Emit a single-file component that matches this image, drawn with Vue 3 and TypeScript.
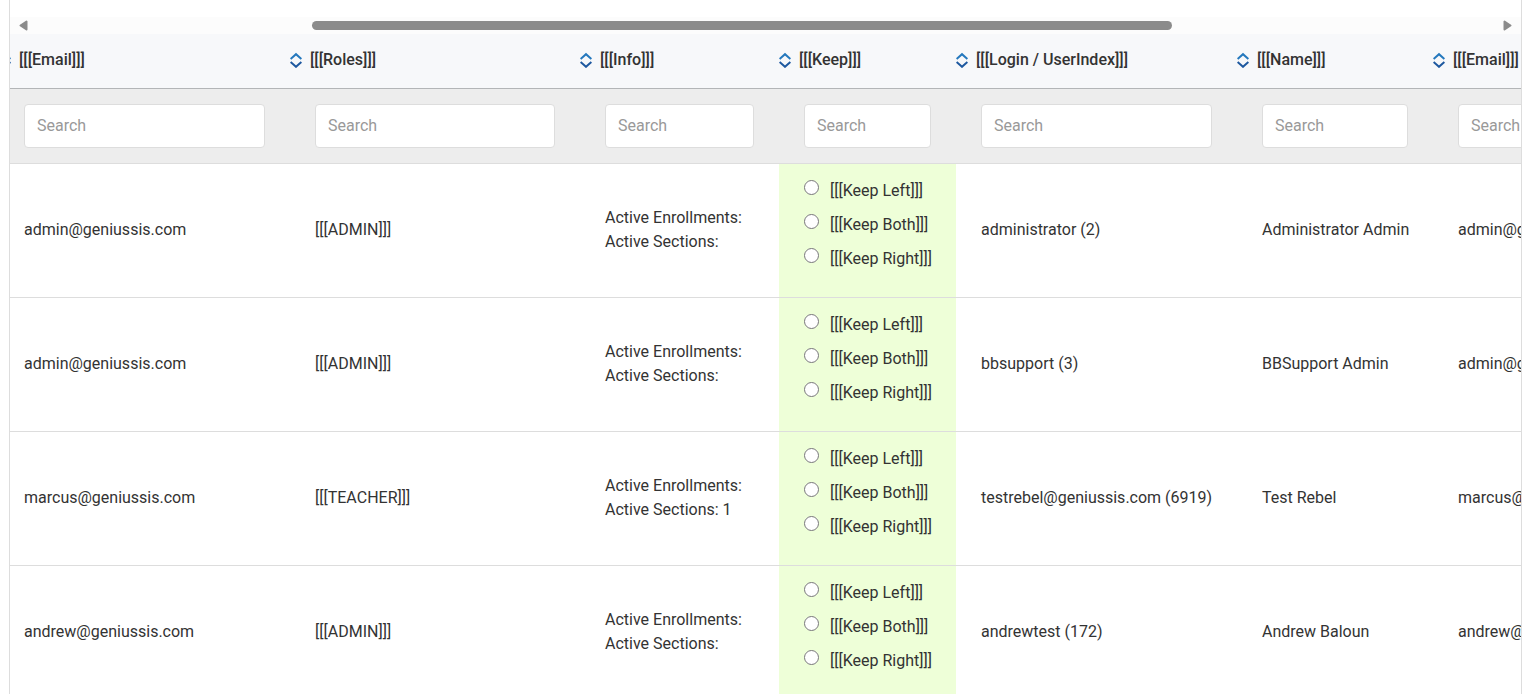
<script setup lang="ts">
import { computed, ref } from 'vue'

interface Column {
  key: 'email' | 'roles' | 'info' | 'keep' | 'login' | 'name' | 'email2'
  label: string
  width: number
}

interface Row {
  email: string
  roles: string
  sections: string
  login: string
  name: string
}

const columns: Column[] = [
  { key: 'email', label: 'Email', width: 291 },
  { key: 'roles', label: 'Roles', width: 290 },
  { key: 'info', label: 'Info', width: 199 },
  { key: 'keep', label: 'Keep', width: 177 },
  { key: 'login', label: 'Login / UserIndex', width: 281 },
  { key: 'name', label: 'Name', width: 196 },
  { key: 'email2', label: 'Email', width: 291 },
]

const rows: Row[] = [
  { email: 'admin@geniussis.com', roles: 'ADMIN', sections: '', login: 'administrator (2)', name: 'Administrator Admin' },
  { email: 'admin@geniussis.com', roles: 'ADMIN', sections: '', login: 'bbsupport (3)', name: 'BBSupport Admin' },
  { email: 'marcus@geniussis.com', roles: 'TEACHER', sections: '1', login: 'testrebel@geniussis.com (6919)', name: 'Test Rebel' },
  { email: 'andrew@geniussis.com', roles: 'ADMIN', sections: '', login: 'andrewtest (172)', name: 'Andrew Baloun' },
]

const keepOptions = ['Left', 'Both', 'Right']
const tag = (text: string) => `[[[${text}]]]`

const filters = ref<Record<string, string>>({})
const choices = ref<string[]>(rows.map(() => ''))
const tableWidth = computed(() => columns.reduce((sum, c) => sum + c.width, 0))
</script>

<template>
  <main class="panel">
    <div class="scrollbar">
      <button type="button" class="arrow" aria-label="Scroll left">
        <svg width="10" height="12" viewBox="0 0 10 12"><path d="M7.5 1.5V9.5L1.5 5.5Z" /></svg>
      </button>
      <div class="track"><div class="thumb"></div></div>
      <button type="button" class="arrow" aria-label="Scroll right">
        <svg width="10" height="12" viewBox="0 0 10 12"><path d="M1.5 1.5V9.5L7.5 5.5Z" /></svg>
      </button>
    </div>
    <div class="viewport">
      <table :style="{ width: tableWidth + 'px' }">
        <colgroup>
          <col v-for="c in columns" :key="c.key" :style="{ width: c.width + 'px' }" />
        </colgroup>
        <thead>
          <tr class="titles">
            <th v-for="c in columns" :key="c.key" scope="col">
              <button type="button" class="sort">
                <svg width="12" height="16" viewBox="0 0 12 16" aria-hidden="true">
                  <path d="M0.6 7L6 2.2L11.4 7" stroke="#2478bd" />
                  <path d="M0.6 10L6 14.8L11.4 10" stroke="#1d589f" />
                </svg>
                <span>{{ tag(c.label) }}</span>
              </button>
            </th>
          </tr>
          <tr class="filters">
            <td v-for="c in columns" :key="c.key">
              <input v-model="filters[c.key]" type="text" placeholder="Search" :aria-label="'Search ' + c.label" />
            </td>
          </tr>
        </thead>
        <tbody>
          <tr v-for="(row, i) in rows" :key="i">
            <td>{{ row.email }}</td>
            <td>{{ tag(row.roles) }}</td>
            <td>
              <div>Active Enrollments:</div>
              <div>Active Sections: {{ row.sections }}</div>
            </td>
            <td class="keep">
              <label v-for="option in keepOptions" :key="option">
                <input v-model="choices[i]" type="radio" :name="'keep-' + i" :value="option" />
                <span>{{ tag('Keep ' + option) }}</span>
              </label>
            </td>
            <td>{{ row.login }}</td>
            <td>{{ row.name }}</td>
            <td>{{ row.email }}</td>
          </tr>
        </tbody>
      </table>
    </div>
  </main>
</template>

<style>
html {
  scrollbar-width: none;
  background: #fff;
}
</style>

<style scoped>
.panel {
  margin: 0 3px 0 9px;
  padding-top: 17px;
  border: 1px solid #ddd;
  border-top: 0;
  color: #333;
  font: 16px/24px Roboto, "Liberation Sans", sans-serif;
}

.scrollbar {
  display: flex;
  align-items: center;
  height: 17px;
  background: #fcfcfc;
}

.arrow {
  display: flex;
  align-items: center;
  justify-content: center;
  width: 27px;
  height: 17px;
  padding: 0;
  border: 0;
  background: none;
}

.arrow path {
  fill: #8b8b8b;
  stroke: #8b8b8b;
  stroke-width: 2;
  stroke-linejoin: round;
}

.track {
  flex: 1;
}

.thumb {
  width: 59%;
  height: 9px;
  margin-left: 18.9%;
  border-radius: 5px;
  background: #8b8b8b;
}

.viewport {
  overflow: hidden;
}

table {
  margin-left: -11px;
  table-layout: fixed;
  border-spacing: 0;
}

th,
td {
  box-sizing: border-box;
  border-bottom: 1px solid #ddd;
  text-align: left;
  white-space: nowrap;
}

th {
  height: 55px;
  padding: 0 0 3px;
  border-bottom-color: #b3b5b7;
  background: #f7f8fa;
}

.sort {
  display: flex;
  align-items: center;
  gap: 8px;
  padding: 0;
  border: 0;
  background: none;
  color: #333;
  font: 500 16px/24px Roboto, "Liberation Sans", sans-serif;
}

.sort svg {
  fill: none;
  stroke-width: 2;
}

td {
  padding: 0 25px 2px;
}

.filters td {
  height: 75px;
  padding: 0 25px;
  background: #ededed;
}

.filters input {
  display: block;
  box-sizing: border-box;
  width: 100%;
  height: 44px;
  padding: 0 12px 2px;
  border: 1px solid #ddd;
  border-radius: 4px;
  background: #fff;
  color: #333;
  font: inherit;
}

.filters input::placeholder {
  color: #999;
}

tbody td {
  height: 134px;
}

tbody .keep {
  padding: 10px 25px 21px;
  background: #eeffd8;
}

.keep label {
  display: flex;
  align-items: center;
  gap: 11px;
  height: 34px;
}

.keep input {
  flex: none;
  width: 15px;
  height: 15px;
  margin: 0 0 7px;
}
</style>
